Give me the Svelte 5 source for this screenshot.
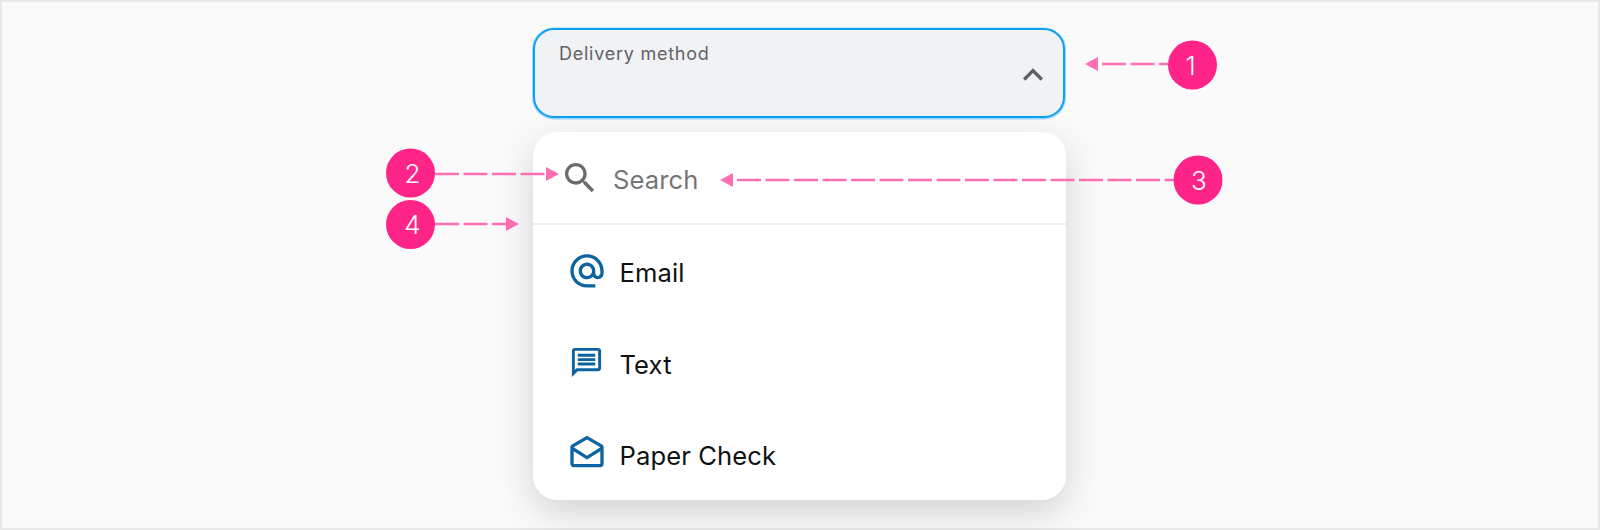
<script>
  const options = [
    {
      label: 'Email',
      size: 40,
      path: 'M12 1.95c-5.52 0-10 4.48-10 10s4.48 10 10 10h5v-2h-5c-4.34 0-8-3.66-8-8s3.66-8 8-8 8 3.66 8 8v1.43c0 .79-.71 1.57-1.5 1.57s-1.5-.78-1.5-1.57v-1.43c0-2.76-2.24-5-5-5s-5 2.24-5 5 2.24 5 5 5c1.38 0 2.64-.56 3.54-1.47.65.89 1.77 1.47 2.96 1.47 1.97 0 3.5-1.6 3.5-3.57v-1.43c0-5.52-4.48-10-10-10zm0 13c-1.66 0-3-1.34-3-3s1.34-3 3-3 3 1.34 3 3-1.34 3-3 3z'
    },
    {
      label: 'Text',
      size: 35,
      path: 'M20 2H4c-1.1 0-2 .9-2 2v18l4-4h14c1.1 0 2-.9 2-2V4c0-1.1-.9-2-2-2zm0 14H5.17L4 17.17V4h16v12zM6 12h12v2H6zm0-3h12v2H6zm0-3h12v2H6z'
    },
    {
      label: 'Paper Check',
      size: 40,
      path: 'M21.99 8c0-.72-.37-1.35-.94-1.7L12 1 2.95 6.3C2.38 6.65 2 7.28 2 8v10c0 1.1.9 2 2 2h16c1.1 0 2-.9 2-2l-.01-10zm-2 0v.01L12 13 4 8l8-4.68L19.99 8zM4 18v-7.66l8 5.02 7.99-4.99L20 18H4z'
    }
  ];

  // callouts drawn over the mock
  const markers = [
    { n: 1, cx: 1192.5, cy: 65, dx: -2, x1: 1102, x2: 1168, y: 64, tip: 1085, base: 1098 },
    { n: 2, cx: 410.5, cy: 173, dx: 2, x1: 435, x2: 546, y: 174, tip: 559, base: 546 },
    { n: 3, cx: 1198, cy: 180, dx: 1, x1: 737, x2: 1174, y: 180, tip: 720, base: 733 },
    { n: 4, cx: 410.5, cy: 224.5, dx: 2, x1: 435, x2: 506, y: 224, tip: 519, base: 506 }
  ];
</script>

<div class="page">
  <div class="select">
    <span class="label">Delivery method</span>
    <svg class="chevron" viewBox="0 0 24 24" width="40" height="40">
      <path d="M12 8l-6 6 1.41 1.41L12 10.83l4.59 4.58L18 14z" />
    </svg>
  </div>

  <div class="menu">
    <div class="search">
      <svg viewBox="0 0 24 24" width="40" height="40">
        <path d="M15.5 14h-.79l-.28-.27C15.41 12.59 16 11.11 16 9.5 16 5.91 13.09 3 9.5 3S3 5.91 3 9.5 5.91 16 9.5 16c1.61 0 3.09-.59 4.23-1.57l.27.28v.79l5 4.99L20.49 19l-4.99-5zm-6 0C7.01 14 5 11.99 5 9.5S7.01 5 9.5 5 14 7.01 14 9.5 11.99 14 9.5 14z" />
      </svg>
      <span class="text">Search</span>
    </div>
    {#each options as option}
      <div class="option">
        <span class="icon">
          <svg viewBox="0 0 24 24" width={option.size} height={option.size}>
            <path d={option.path} />
          </svg>
        </span>
        <span class="text">{option.label}</span>
      </div>
    {/each}
  </div>

  <svg class="callouts" viewBox="0 0 1600 530" width="1600" height="530">
    {#each markers as m}
      <line x1={m.x1} x2={m.x2} y1={m.y} y2={m.y} class="dash" />
      <polygon points="{m.tip},{m.y} {m.base},{m.y - 7} {m.base},{m.y + 7}" class="arrow" />
      <circle cx={m.cx} cy={m.cy} r="24.5" class="dot" />
      <text x={m.cx + m.dx} y={m.cy + 9.5} class="num">{m.n}</text>
    {/each}
  </svg>
</div>

<style>
  :global(body) {
    margin: 0;
  }

  .page {
    position: relative;
    box-sizing: border-box;
    width: 1600px;
    height: 530px;
    padding: 28px 0 0 533px;
    overflow: hidden;
    background: #fafafa;
    box-shadow: inset 0 0 0 2px #e8e8e8;
    font-family: Inter, "Liberation Sans", sans-serif;
  }

  .select {
    box-sizing: border-box;
    width: 532px;
    height: 90px;
    padding: 13px 10px 0 24px;
    display: flex;
    justify-content: space-between;
    background: #f1f2f4;
    border: 2px solid #0ea0f5;
    border-radius: 21px;
    box-shadow: 0 0.5px 0 1px rgba(14, 160, 245, 0.4);
  }

  .label {
    font-size: 18px;
    line-height: 22px;
    letter-spacing: 0.75px;
    color: #616366;
  }

  .chevron {
    margin-top: 12px;
    fill: #5f6164;
  }

  .menu {
    box-sizing: border-box;
    width: 533px;
    height: 368px;
    margin-top: 14px;
    background: #fff;
    border-radius: 24px;
    box-shadow: 0 12px 36px rgba(0, 0, 0, 0.16);
  }

  .search {
    height: 93px;
    box-sizing: border-box;
    display: flex;
    align-items: center;
    gap: 13px;
    padding: 0 0 0 27px;
    border-bottom: 2px solid #efefef;
    color: #757575;
  }

  .search svg {
    fill: #6b6b6b;
  }

  .text {
    margin-top: 4px;
    font-size: 25.6px;
    letter-spacing: 0.1px;
  }

  .option {
    height: 91.5px;
    display: flex;
    align-items: center;
    gap: 13px;
    padding: 0 0 0 33px;
    color: #111;
  }

  .icon {
    width: 40px;
    height: 40px;
    margin-left: 0.5px;
    display: flex;
    align-items: center;
    justify-content: center;
  }

  .icon svg {
    fill: #0b64a0;
  }

  .callouts {
    position: absolute;
    top: 0;
    left: 0;
    pointer-events: none;
  }

  .dash {
    stroke: #ff6eb4;
    stroke-width: 2.5;
    stroke-dasharray: 24 4.5;
  }

  .arrow {
    fill: #ff6eb4;
  }

  .dot {
    fill: #ff2488;
  }

  .num {
    fill: #fff;
    font-size: 26px;
    font-weight: 300;
    text-anchor: middle;
  }
</style>
